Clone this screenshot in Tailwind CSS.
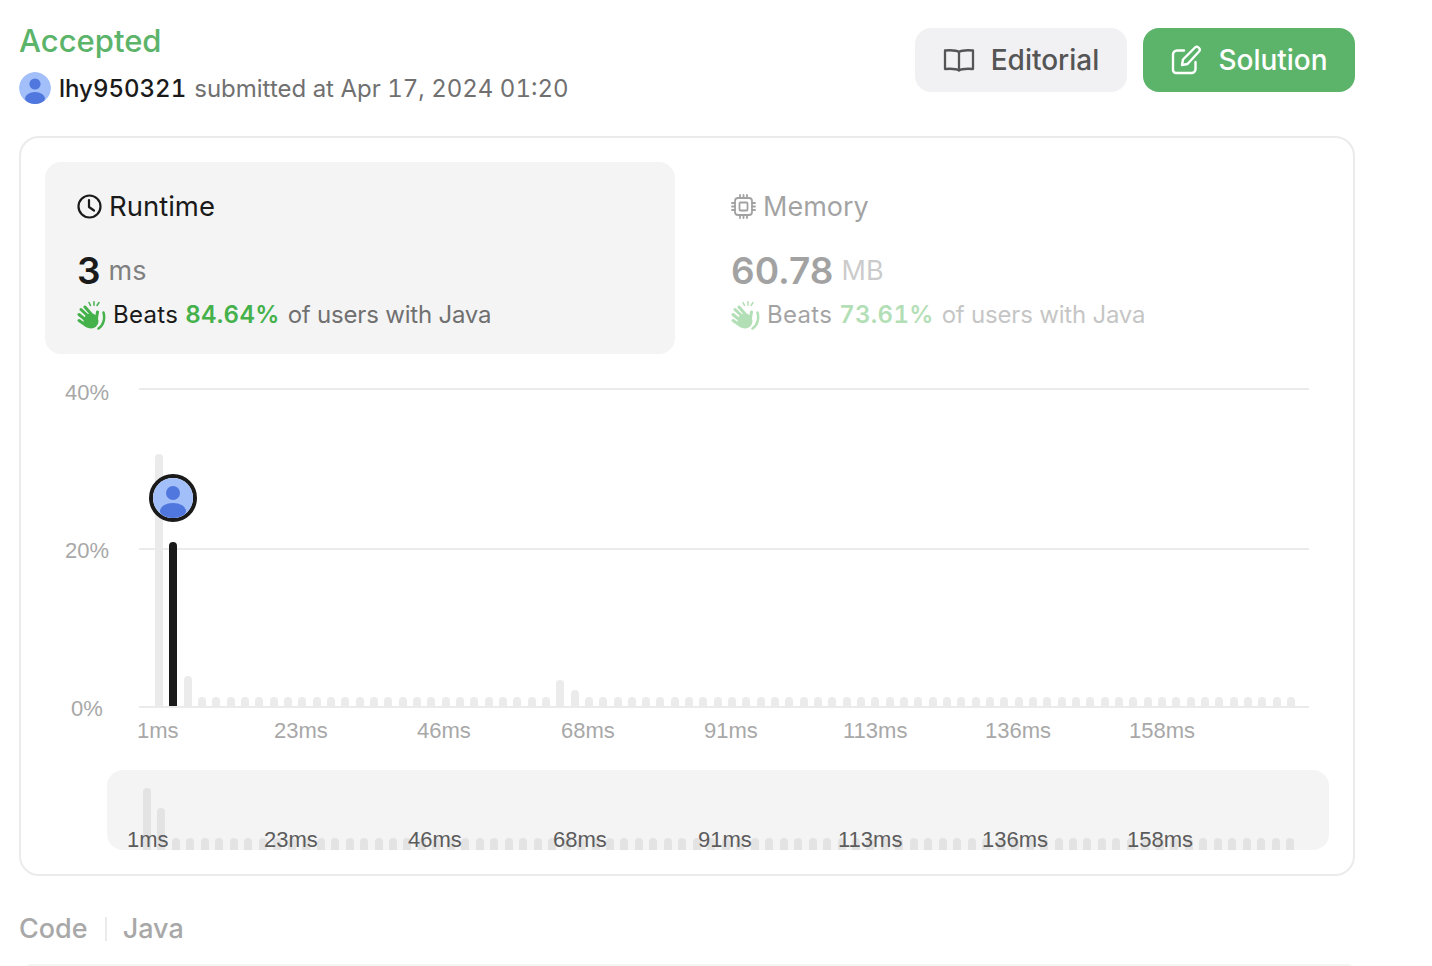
<!doctype html>
<html>
<head>
<meta charset="utf-8">
<script src="https://cdn.jsdelivr.net/npm/@tailwindcss/browser@4"></script>
</head>
<body class="bg-white font-['Inter','Noto_Sans',sans-serif] overflow-hidden">
<div class="w-[1432px] h-[966px] overflow-hidden pl-[19px] pt-[20px]">
  <div class="w-[1336px]">
    <!-- header -->
    <div class="flex justify-between h-[116px]">
      <div>
        <div class="text-[31px] leading-[40px] font-medium text-[#5cb46a] pt-px h-[40px]">Accepted</div>
        <div class="flex items-center mt-[12px] h-[32px]">
          <svg class="w-8 h-8 rounded-full" viewBox="0 0 32 32"><circle cx="16" cy="16" r="16" fill="#a3bffa"/><circle cx="16" cy="12" r="5.6" fill="#5077dd"/><ellipse cx="16" cy="26.5" rx="10" ry="6.5" fill="#5077dd"/></svg>
          <span class="ml-2 text-[24px] font-medium text-[#1a1a1a] tabular-nums translate-y-px">lhy950321</span>
          <span class="ml-2 text-[24px] text-[#707070] tabular-nums translate-y-px">submitted at Apr 17, 2024 01:20</span>
        </div>
      </div>
      <div class="flex gap-4 mt-[8px] h-[64px]">
        <div class="w-[212px] h-16 rounded-2xl bg-[#f1f1f3] flex items-center justify-center gap-4 text-[28px] font-medium text-[#555555]">
          <svg class="w-8 h-8" viewBox="0 0 32 32" fill="none" stroke="#555555" stroke-width="2.300" stroke-linejoin="round" stroke-linecap="round"><path d="M16 8C13 6 8 6 2 6.500V25c6-.5 11-.5 14 1.500c3-2 8-2 14-1.500V6.500C24 6 19 6 16 8z"/><path d="M16 8v18"/></svg>
          <span>Editorial</span>
        </div>
        <div class="w-[212px] h-16 rounded-2xl bg-[#5cb46a] flex items-center justify-center gap-4 text-[28px] font-medium text-white">
          <svg class="w-8 h-8" viewBox="0 0 32 32" fill="none" stroke="#ffffff" stroke-width="2.400" stroke-linejoin="round" stroke-linecap="round"><path d="M14 6.500H7a4 4 0 0 0-4 4V26a3 3 0 0 0 3 3h15.500a4 4 0 0 0 4-4v-7"/><path d="M12 21l1-5.500L25 3.500a2.500 2.500 0 0 1 3.500 0l.5.5a2.500 2.500 0 0 1 0 3.500L17.500 20z"/></svg>
          <span>Solution</span>
        </div>
      </div>
    </div>
    <!-- card -->
    <div class="h-[740px] border-2 border-[#ebebeb] rounded-[20px] p-6 relative">
      <div class="grid grid-cols-2 gap-6 h-[192px]">
        <div class="bg-[#f4f4f4] rounded-2xl px-8 pt-[28px]">
          <div class="flex items-center gap-[7px] h-8 text-[27.500px] text-[#1a1a1a]">
            <svg class="w-[25px] h-[25px]" viewBox="0 0 25 25" fill="none" stroke="#1a1a1a" stroke-width="2.200" stroke-linecap="round" stroke-linejoin="round"><circle cx="12.500" cy="12.500" r="11"/><path d="M12 6v7l5 3.500"/></svg>
            <span class="translate-y-px">Runtime</span>
          </div>
          <div class="flex items-baseline gap-[8px] mt-[32px] h-[32px] leading-8">
            <span class="text-[37px] font-semibold text-[#1a1a1a] translate-y-px">3</span>
            <span class="text-[27px] text-[#808080] -translate-y-[3px]">ms</span>
          </div>
          <div class="flex items-center gap-[7px] mt-[13px] h-8 text-[24px] tracking-[0.3px]">
            <svg class="w-[29px] h-[29px]" viewBox="0 0 29 29" fill="none" stroke="#44b14b" stroke-linecap="round"><circle cx="14" cy="20" r="7.500" fill="#44b14b" stroke="none"/><path stroke-width="3" d="M10 25L2 19.500M10 20L2 13.500M12 16L4 8.500M15 14L8 6M19 20L20.500 11"/><path stroke-width="2.500" d="M26.500 11.500C28 17 27 24 21.500 27.500"/><path stroke-width="1.500" d="M12 1.500l1.500 3M17 .8v3.500M22 1.500l-2 3"/></svg>
            <span class="text-[#1a1a1a]">Beats</span>
            <span class="font-semibold text-[#44b14b] tabular-nums">84.64%</span>
            <span class="text-[#707070] tracking-[-0.2px] ml-px">of users with Java</span>
          </div>
        </div>
        <div class="rounded-2xl px-8 pt-[28px] opacity-40">
          <div class="flex items-center gap-[7px] h-8 text-[27px] text-[#1a1a1a]">
            <svg class="w-[25px] h-[25px]" viewBox="0 0 25 25" fill="none" stroke="#1a1a1a" stroke-width="1.800" stroke-linecap="round" stroke-linejoin="round"><rect x="4" y="4" width="17" height="17" rx="3"/><rect x="8.500" y="8.500" width="8" height="8" rx="1"/><path d="M9 1v3M12.500 1v3M16 1v3M9 21v3M12.500 21v3M16 21v3M1 9h3M1 12.500h3M1 16h3M21 9h3M21 12.500h3M21 16h3"/></svg>
            <span class="translate-y-px">Memory</span>
          </div>
          <div class="flex items-baseline gap-[8px] mt-[32px] h-[32px] leading-8">
            <span class="text-[37px] font-semibold text-[#1a1a1a] translate-y-px">60.78</span>
            <span class="text-[27px] text-[#808080] -translate-y-[3px]">MB</span>
          </div>
          <div class="flex items-center gap-[7px] mt-[13px] h-8 text-[24px] tracking-[0.3px]">
            <svg class="w-[29px] h-[29px]" viewBox="0 0 29 29" fill="none" stroke="#44b14b" stroke-linecap="round"><circle cx="14" cy="20" r="7.500" fill="#44b14b" stroke="none"/><path stroke-width="3" d="M10 25L2 19.500M10 20L2 13.500M12 16L4 8.500M15 14L8 6M19 20L20.500 11"/><path stroke-width="2.500" d="M26.500 11.500C28 17 27 24 21.500 27.500"/><path stroke-width="1.500" d="M12 1.500l1.500 3M17 .8v3.500M22 1.500l-2 3"/></svg>
            <span class="text-[#1a1a1a]">Beats</span>
            <span class="font-semibold text-[#44b14b] tabular-nums">73.61%</span>
            <span class="text-[#707070] tracking-[-0.2px] ml-px">of users with Java</span>
          </div>
        </div>
      </div>
      <!-- chart -->
      <div class="relative h-[380px] font-['Liberation_Sans',sans-serif] text-[22px] text-[#a8a8a8]">
        <div class="absolute left-[94px] right-[20px] top-[34px] h-[2px] bg-[#ebebeb]"></div>
        <div class="absolute left-[94px] right-[20px] top-[194px] h-[2px] bg-[#ebebeb]"></div>
        <div class="absolute left-[94px] right-[20px] top-[352px] h-[2px] bg-[#ebebeb]"></div>
        <span class="absolute left-[20px] top-[26px] leading-[26px]">40%</span>
        <span class="absolute left-[20px] top-[184px] leading-[26px]">20%</span>
        <span class="absolute left-[26px] top-[342px] leading-[26px]">0%</span>
        <div class="absolute left-[110px] top-[1px] w-[1140px] h-[351px] flex items-end justify-between">
          <i class="w-2 rounded-t-full bg-[#ebebeb] h-[252px]"></i>
          <i class="w-2 rounded-t-full bg-[#1a1a1a] h-[164px]"></i>
          <i class="w-2 rounded-t-full bg-[#ebebeb] h-[30px]"></i>
          <i class="w-2 rounded-t-[4px] bg-[#ebebeb] h-[9px]"></i><i class="w-2 rounded-t-[4px] bg-[#ebebeb] h-[9px]"></i><i class="w-2 rounded-t-[4px] bg-[#ebebeb] h-[9px]"></i><i class="w-2 rounded-t-[4px] bg-[#ebebeb] h-[9px]"></i><i class="w-2 rounded-t-[4px] bg-[#ebebeb] h-[9px]"></i><i class="w-2 rounded-t-[4px] bg-[#ebebeb] h-[9px]"></i><i class="w-2 rounded-t-[4px] bg-[#ebebeb] h-[9px]"></i><i class="w-2 rounded-t-[4px] bg-[#ebebeb] h-[9px]"></i><i class="w-2 rounded-t-[4px] bg-[#ebebeb] h-[9px]"></i><i class="w-2 rounded-t-[4px] bg-[#ebebeb] h-[9px]"></i><i class="w-2 rounded-t-[4px] bg-[#ebebeb] h-[9px]"></i><i class="w-2 rounded-t-[4px] bg-[#ebebeb] h-[9px]"></i><i class="w-2 rounded-t-[4px] bg-[#ebebeb] h-[9px]"></i><i class="w-2 rounded-t-[4px] bg-[#ebebeb] h-[9px]"></i><i class="w-2 rounded-t-[4px] bg-[#ebebeb] h-[9px]"></i><i class="w-2 rounded-t-[4px] bg-[#ebebeb] h-[9px]"></i><i class="w-2 rounded-t-[4px] bg-[#ebebeb] h-[9px]"></i><i class="w-2 rounded-t-[4px] bg-[#ebebeb] h-[9px]"></i><i class="w-2 rounded-t-[4px] bg-[#ebebeb] h-[9px]"></i><i class="w-2 rounded-t-[4px] bg-[#ebebeb] h-[9px]"></i><i class="w-2 rounded-t-[4px] bg-[#ebebeb] h-[9px]"></i><i class="w-2 rounded-t-[4px] bg-[#ebebeb] h-[9px]"></i><i class="w-2 rounded-t-[4px] bg-[#ebebeb] h-[9px]"></i><i class="w-2 rounded-t-[4px] bg-[#ebebeb] h-[9px]"></i><i class="w-2 rounded-t-[4px] bg-[#ebebeb] h-[9px]"></i>
          <i class="w-2 rounded-t-[4px] bg-[#ebebeb] h-[26px]"></i>
          <i class="w-2 rounded-t-[4px] bg-[#ebebeb] h-[16px]"></i>
          <i class="w-2 rounded-t-[4px] bg-[#ebebeb] h-[9px]"></i><i class="w-2 rounded-t-[4px] bg-[#ebebeb] h-[9px]"></i><i class="w-2 rounded-t-[4px] bg-[#ebebeb] h-[9px]"></i><i class="w-2 rounded-t-[4px] bg-[#ebebeb] h-[9px]"></i><i class="w-2 rounded-t-[4px] bg-[#ebebeb] h-[9px]"></i><i class="w-2 rounded-t-[4px] bg-[#ebebeb] h-[9px]"></i><i class="w-2 rounded-t-[4px] bg-[#ebebeb] h-[9px]"></i><i class="w-2 rounded-t-[4px] bg-[#ebebeb] h-[9px]"></i><i class="w-2 rounded-t-[4px] bg-[#ebebeb] h-[9px]"></i><i class="w-2 rounded-t-[4px] bg-[#ebebeb] h-[9px]"></i>
          <i class="w-2 rounded-t-[4px] bg-[#ebebeb] h-[9px]"></i><i class="w-2 rounded-t-[4px] bg-[#ebebeb] h-[9px]"></i><i class="w-2 rounded-t-[4px] bg-[#ebebeb] h-[9px]"></i><i class="w-2 rounded-t-[4px] bg-[#ebebeb] h-[9px]"></i><i class="w-2 rounded-t-[4px] bg-[#ebebeb] h-[9px]"></i><i class="w-2 rounded-t-[4px] bg-[#ebebeb] h-[9px]"></i><i class="w-2 rounded-t-[4px] bg-[#ebebeb] h-[9px]"></i><i class="w-2 rounded-t-[4px] bg-[#ebebeb] h-[9px]"></i><i class="w-2 rounded-t-[4px] bg-[#ebebeb] h-[9px]"></i><i class="w-2 rounded-t-[4px] bg-[#ebebeb] h-[9px]"></i>
          <i class="w-2 rounded-t-[4px] bg-[#ebebeb] h-[9px]"></i><i class="w-2 rounded-t-[4px] bg-[#ebebeb] h-[9px]"></i><i class="w-2 rounded-t-[4px] bg-[#ebebeb] h-[9px]"></i><i class="w-2 rounded-t-[4px] bg-[#ebebeb] h-[9px]"></i><i class="w-2 rounded-t-[4px] bg-[#ebebeb] h-[9px]"></i><i class="w-2 rounded-t-[4px] bg-[#ebebeb] h-[9px]"></i><i class="w-2 rounded-t-[4px] bg-[#ebebeb] h-[9px]"></i><i class="w-2 rounded-t-[4px] bg-[#ebebeb] h-[9px]"></i><i class="w-2 rounded-t-[4px] bg-[#ebebeb] h-[9px]"></i><i class="w-2 rounded-t-[4px] bg-[#ebebeb] h-[9px]"></i>
          <i class="w-2 rounded-t-[4px] bg-[#ebebeb] h-[9px]"></i><i class="w-2 rounded-t-[4px] bg-[#ebebeb] h-[9px]"></i><i class="w-2 rounded-t-[4px] bg-[#ebebeb] h-[9px]"></i><i class="w-2 rounded-t-[4px] bg-[#ebebeb] h-[9px]"></i><i class="w-2 rounded-t-[4px] bg-[#ebebeb] h-[9px]"></i><i class="w-2 rounded-t-[4px] bg-[#ebebeb] h-[9px]"></i><i class="w-2 rounded-t-[4px] bg-[#ebebeb] h-[9px]"></i><i class="w-2 rounded-t-[4px] bg-[#ebebeb] h-[9px]"></i><i class="w-2 rounded-t-[4px] bg-[#ebebeb] h-[9px]"></i><i class="w-2 rounded-t-[4px] bg-[#ebebeb] h-[9px]"></i>
          <i class="w-2 rounded-t-[4px] bg-[#ebebeb] h-[9px]"></i><i class="w-2 rounded-t-[4px] bg-[#ebebeb] h-[9px]"></i><i class="w-2 rounded-t-[4px] bg-[#ebebeb] h-[9px]"></i><i class="w-2 rounded-t-[4px] bg-[#ebebeb] h-[9px]"></i><i class="w-2 rounded-t-[4px] bg-[#ebebeb] h-[9px]"></i><i class="w-2 rounded-t-[4px] bg-[#ebebeb] h-[9px]"></i><i class="w-2 rounded-t-[4px] bg-[#ebebeb] h-[9px]"></i><i class="w-2 rounded-t-[4px] bg-[#ebebeb] h-[9px]"></i><i class="w-2 rounded-t-[4px] bg-[#ebebeb] h-[9px]"></i><i class="w-2 rounded-t-[4px] bg-[#ebebeb] h-[9px]"></i>
        </div>
        <div class="absolute left-[104px] top-[120px] w-12 h-12 rounded-full border-[4px] border-[#1a1a1a] overflow-hidden">
          <svg class="w-full h-full" viewBox="0 0 40 40"><rect width="40" height="40" fill="#a3bffa"/><circle cx="20" cy="15" r="7" fill="#5077dd"/><ellipse cx="20" cy="33" rx="13" ry="8" fill="#5077dd"/></svg>
        </div>
        <span class="absolute left-[92px] top-[364px] leading-[26px]">1ms</span>
        <span class="absolute left-[229px] top-[364px] leading-[26px]">23ms</span>
        <span class="absolute left-[372px] top-[364px] leading-[26px]">46ms</span>
        <span class="absolute left-[516px] top-[364px] leading-[26px]">68ms</span>
        <span class="absolute left-[659px] top-[364px] leading-[26px]">91ms</span>
        <span class="absolute left-[798px] top-[364px] leading-[26px]">113ms</span>
        <span class="absolute left-[940px] top-[364px] leading-[26px]">136ms</span>
        <span class="absolute left-[1084px] top-[364px] leading-[26px]">158ms</span>
      </div>
      <!-- brush -->
      <div class="relative mt-[36px] ml-[62px] w-[1222px] h-[80px] rounded-2xl bg-[#f4f4f4] font-['Liberation_Sans',sans-serif] text-[22px] text-[#5c5c5c]">
        <div class="absolute left-[36px] top-0 w-[1152px] h-[80px] flex items-end justify-between">
          <i class="w-2 rounded-t-[4px] bg-[#e3e3e3] h-[62px]"></i>
          <i class="w-2 rounded-t-[4px] bg-[#e3e3e3] h-[42px]"></i>
          <i class="w-2 rounded-t-[4px] bg-[#e3e3e3] h-[12px]"></i><i class="w-2 rounded-t-[4px] bg-[#e3e3e3] h-[12px]"></i><i class="w-2 rounded-t-[4px] bg-[#e3e3e3] h-[12px]"></i><i class="w-2 rounded-t-[4px] bg-[#e3e3e3] h-[12px]"></i><i class="w-2 rounded-t-[4px] bg-[#e3e3e3] h-[12px]"></i><i class="w-2 rounded-t-[4px] bg-[#e3e3e3] h-[12px]"></i><i class="w-2 rounded-t-[4px] bg-[#e3e3e3] h-[12px]"></i><i class="w-2 rounded-t-[4px] bg-[#e3e3e3] h-[12px]"></i>
          <i class="w-2 rounded-t-[4px] bg-[#e3e3e3] h-[12px]"></i><i class="w-2 rounded-t-[4px] bg-[#e3e3e3] h-[12px]"></i><i class="w-2 rounded-t-[4px] bg-[#e3e3e3] h-[12px]"></i><i class="w-2 rounded-t-[4px] bg-[#e3e3e3] h-[12px]"></i><i class="w-2 rounded-t-[4px] bg-[#e3e3e3] h-[12px]"></i><i class="w-2 rounded-t-[4px] bg-[#e3e3e3] h-[12px]"></i><i class="w-2 rounded-t-[4px] bg-[#e3e3e3] h-[12px]"></i><i class="w-2 rounded-t-[4px] bg-[#e3e3e3] h-[12px]"></i><i class="w-2 rounded-t-[4px] bg-[#e3e3e3] h-[12px]"></i><i class="w-2 rounded-t-[4px] bg-[#e3e3e3] h-[12px]"></i>
          <i class="w-2 rounded-t-[4px] bg-[#e3e3e3] h-[12px]"></i><i class="w-2 rounded-t-[4px] bg-[#e3e3e3] h-[12px]"></i><i class="w-2 rounded-t-[4px] bg-[#e3e3e3] h-[12px]"></i><i class="w-2 rounded-t-[4px] bg-[#e3e3e3] h-[12px]"></i><i class="w-2 rounded-t-[4px] bg-[#e3e3e3] h-[12px]"></i><i class="w-2 rounded-t-[4px] bg-[#e3e3e3] h-[12px]"></i><i class="w-2 rounded-t-[4px] bg-[#e3e3e3] h-[12px]"></i><i class="w-2 rounded-t-[4px] bg-[#e3e3e3] h-[12px]"></i><i class="w-2 rounded-t-[4px] bg-[#e3e3e3] h-[12px]"></i><i class="w-2 rounded-t-[4px] bg-[#e3e3e3] h-[12px]"></i>
          <i class="w-2 rounded-t-[4px] bg-[#e3e3e3] h-[12px]"></i><i class="w-2 rounded-t-[4px] bg-[#e3e3e3] h-[12px]"></i><i class="w-2 rounded-t-[4px] bg-[#e3e3e3] h-[12px]"></i><i class="w-2 rounded-t-[4px] bg-[#e3e3e3] h-[12px]"></i><i class="w-2 rounded-t-[4px] bg-[#e3e3e3] h-[12px]"></i><i class="w-2 rounded-t-[4px] bg-[#e3e3e3] h-[12px]"></i><i class="w-2 rounded-t-[4px] bg-[#e3e3e3] h-[12px]"></i><i class="w-2 rounded-t-[4px] bg-[#e3e3e3] h-[12px]"></i><i class="w-2 rounded-t-[4px] bg-[#e3e3e3] h-[12px]"></i><i class="w-2 rounded-t-[4px] bg-[#e3e3e3] h-[12px]"></i>
          <i class="w-2 rounded-t-[4px] bg-[#e3e3e3] h-[12px]"></i><i class="w-2 rounded-t-[4px] bg-[#e3e3e3] h-[12px]"></i><i class="w-2 rounded-t-[4px] bg-[#e3e3e3] h-[12px]"></i><i class="w-2 rounded-t-[4px] bg-[#e3e3e3] h-[12px]"></i><i class="w-2 rounded-t-[4px] bg-[#e3e3e3] h-[12px]"></i><i class="w-2 rounded-t-[4px] bg-[#e3e3e3] h-[12px]"></i><i class="w-2 rounded-t-[4px] bg-[#e3e3e3] h-[12px]"></i><i class="w-2 rounded-t-[4px] bg-[#e3e3e3] h-[12px]"></i><i class="w-2 rounded-t-[4px] bg-[#e3e3e3] h-[12px]"></i><i class="w-2 rounded-t-[4px] bg-[#e3e3e3] h-[12px]"></i>
          <i class="w-2 rounded-t-[4px] bg-[#e3e3e3] h-[12px]"></i><i class="w-2 rounded-t-[4px] bg-[#e3e3e3] h-[12px]"></i><i class="w-2 rounded-t-[4px] bg-[#e3e3e3] h-[12px]"></i><i class="w-2 rounded-t-[4px] bg-[#e3e3e3] h-[12px]"></i><i class="w-2 rounded-t-[4px] bg-[#e3e3e3] h-[12px]"></i><i class="w-2 rounded-t-[4px] bg-[#e3e3e3] h-[12px]"></i><i class="w-2 rounded-t-[4px] bg-[#e3e3e3] h-[12px]"></i><i class="w-2 rounded-t-[4px] bg-[#e3e3e3] h-[12px]"></i><i class="w-2 rounded-t-[4px] bg-[#e3e3e3] h-[12px]"></i><i class="w-2 rounded-t-[4px] bg-[#e3e3e3] h-[12px]"></i>
          <i class="w-2 rounded-t-[4px] bg-[#e3e3e3] h-[12px]"></i><i class="w-2 rounded-t-[4px] bg-[#e3e3e3] h-[12px]"></i><i class="w-2 rounded-t-[4px] bg-[#e3e3e3] h-[12px]"></i><i class="w-2 rounded-t-[4px] bg-[#e3e3e3] h-[12px]"></i><i class="w-2 rounded-t-[4px] bg-[#e3e3e3] h-[12px]"></i><i class="w-2 rounded-t-[4px] bg-[#e3e3e3] h-[12px]"></i><i class="w-2 rounded-t-[4px] bg-[#e3e3e3] h-[12px]"></i><i class="w-2 rounded-t-[4px] bg-[#e3e3e3] h-[12px]"></i><i class="w-2 rounded-t-[4px] bg-[#e3e3e3] h-[12px]"></i><i class="w-2 rounded-t-[4px] bg-[#e3e3e3] h-[12px]"></i>
          <i class="w-2 rounded-t-[4px] bg-[#e3e3e3] h-[12px]"></i><i class="w-2 rounded-t-[4px] bg-[#e3e3e3] h-[12px]"></i><i class="w-2 rounded-t-[4px] bg-[#e3e3e3] h-[12px]"></i><i class="w-2 rounded-t-[4px] bg-[#e3e3e3] h-[12px]"></i><i class="w-2 rounded-t-[4px] bg-[#e3e3e3] h-[12px]"></i><i class="w-2 rounded-t-[4px] bg-[#e3e3e3] h-[12px]"></i><i class="w-2 rounded-t-[4px] bg-[#e3e3e3] h-[12px]"></i><i class="w-2 rounded-t-[4px] bg-[#e3e3e3] h-[12px]"></i><i class="w-2 rounded-t-[4px] bg-[#e3e3e3] h-[12px]"></i><i class="w-2 rounded-t-[4px] bg-[#e3e3e3] h-[12px]"></i>
        </div>
        <span class="absolute left-[20px] top-[60px] leading-[20px] h-[20px]">1ms</span>
        <span class="absolute left-[157px] top-[60px] leading-[20px] h-[20px]">23ms</span>
        <span class="absolute left-[301px] top-[60px] leading-[20px] h-[20px]">46ms</span>
        <span class="absolute left-[446px] top-[60px] leading-[20px] h-[20px]">68ms</span>
        <span class="absolute left-[591px] top-[60px] leading-[20px] h-[20px]">91ms</span>
        <span class="absolute left-[731px] top-[60px] leading-[20px] h-[20px]">113ms</span>
        <span class="absolute left-[875px] top-[60px] leading-[20px] h-[20px]">136ms</span>
        <span class="absolute left-[1020px] top-[60px] leading-[20px] h-[20px]">158ms</span>
      </div>
    </div>
    <!-- code -->
    <div class="flex items-center h-[32px] mt-[37px] text-[27px] font-medium text-[#a8a8a8]">
      <span>Code</span>
      <span class="w-[2px] h-6 bg-[#ebebeb] ml-[17px] mr-[16px]"></span>
      <span>Java</span>
    </div>
    <div class="mt-[19px] ml-[4px] h-20 border-t-2 border-[#f4f4f4] rounded-t-lg"></div>
  </div>
</div>
</body>
</html>
